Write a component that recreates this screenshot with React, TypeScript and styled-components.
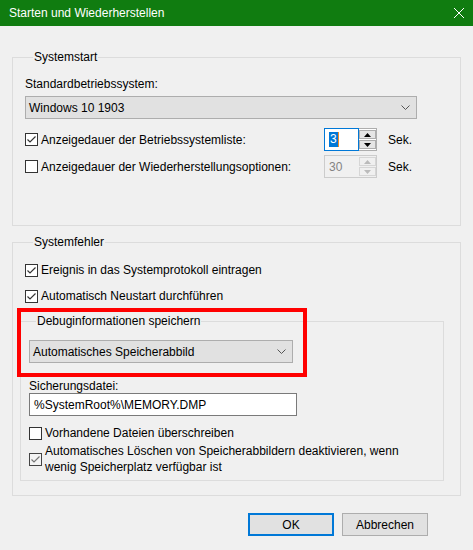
import React from "react";
import styled, { createGlobalStyle } from "styled-components";

const GlobalStyle = createGlobalStyle`
  html, body {
    margin: 0;
    padding: 0;
    background: #f0f0f0;
  }
  body {
    font-family: "Liberation Sans", Arial, sans-serif;
    font-size: 12px;
    color: #000;
  }
`;

const Window = styled.div`
  width: 473px;
  height: 550px;
  background: #f0f0f0;
  display: flex;
  flex-direction: column;
  overflow: hidden;
`;

const TitleBar = styled.div`
  height: 26px;
  flex: none;
  background: #107c10;
  color: #fff;
  display: flex;
  align-items: center;
  justify-content: space-between;
  padding: 0 9px 0 9px;
  font-size: 12px;
`;

const CloseIcon = styled.svg`
  width: 10px;
  height: 10px;
`;

const Body = styled.div`
  padding: 23px 12px 0 12px;
  display: flex;
  flex-direction: column;
`;

const Group = styled.fieldset<{ $pb: number; $mt?: number }>`
  margin: ${(p) => p.$mt ?? 0}px 0 0 0;
  padding: 11px 0 ${(p) => p.$pb}px 12px;
  border: 1px solid #dcdcdc;
  min-width: 0;
  display: flex;
  flex-direction: column;
  position: relative;
`;

const Legend = styled.legend<{ $ml: number }>`
  padding: 0 1px;
  margin-left: ${(p) => p.$ml}px;
  line-height: 16px;
  font-size: 12px;
`;

const InnerGroup = styled.fieldset`
  margin: 9px 16px 0 -5px;
  padding: 4px 0 5px 8px;
  border: 1px solid #dcdcdc;
  min-width: 0;
  display: flex;
  flex-direction: column;
`;

const Label = styled.div<{ $mt?: number }>`
  line-height: 16px;
  margin-top: ${(p) => p.$mt ?? 0}px;
`;

const Combo = styled.div<{ $w: number; $mt: number }>`
  width: ${(p) => p.$w}px;
  height: 23px;
  box-sizing: border-box;
  margin-top: ${(p) => p.$mt}px;
  background: #e1e1e1;
  border: 1px solid #adadad;
  display: flex;
  align-items: center;
  justify-content: space-between;
  padding: 0 6px 0 3px;
`;

const Chevron = styled.svg`
  width: 9px;
  height: 5px;
`;

const TextBox = styled.div`
  width: 268px;
  height: 23px;
  box-sizing: border-box;
  margin-top: -1px;
  background: #fff;
  border: 1px solid #7a7a7a;
  display: flex;
  align-items: center;
  padding: 0 4px;
`;

const OptionRow = styled.div<{ $mt: number }>`
  display: grid;
  grid-template-columns: 288px 53px auto;
  column-gap: 11px;
  align-items: center;
  margin-top: ${(p) => p.$mt}px;
  height: 23px;
`;

const Check = styled.label<{ $mt: number }>`
  display: flex;
  align-items: center;
  gap: 3px;
  margin-top: ${(p) => p.$mt}px;
  line-height: 16px;
`;

const Box = styled.span<{ $dim?: boolean }>`
  width: 13px;
  height: 13px;
  box-sizing: border-box;
  border: 1px solid ${(p) => (p.$dim ? "#444" : "#333")};
  background: ${(p) => (p.$dim ? "#f4f4f4" : "#fff")};
  flex: none;
  display: flex;
  align-items: center;
  justify-content: center;
`;

const Spin = styled.div<{ $active?: boolean }>`
  height: 23px;
  display: flex;
  box-sizing: border-box;
  background: ${(p) => (p.$active ? "#fff" : "#f0f0f0")};
  border: 1px solid ${(p) => (p.$active ? "#adadad" : "#cccccc")};
`;

const SpinText = styled.div<{ $active?: boolean }>`
  flex: 1;
  box-sizing: border-box;
  margin: -1px 0 -1px -1px;
  border: 1px solid ${(p) => (p.$active ? "#0078d7" : "transparent")};
  display: flex;
  align-items: center;
  padding-left: 4px;
  color: ${(p) => (p.$active ? "#fff" : "#838383")};
`;

const Selected = styled.span`
  background: #0078d7;
  line-height: 15px;
  padding: 0 1px;
  border-right: 1px solid #f08a24;
`;

const SpinButtons = styled.div`
  width: 17px;
  display: flex;
  flex-direction: column;
  gap: 1px;
  padding: 1px 0;
`;

const SpinButton = styled.div<{ $active?: boolean }>`
  flex: 1;
  box-sizing: border-box;
  background: ${(p) => (p.$active ? "#e5e5e5" : "#f0f0f0")};
  border: 1px solid ${(p) => (p.$active ? "#adadad" : "#d6d6d6")};
  display: flex;
  align-items: center;
  justify-content: center;
`;

const Arrow = styled.svg`
  width: 7px;
  height: 4px;
`;

const Unit = styled.span`
  line-height: 16px;
`;

const Highlight = styled.div`
  position: absolute;
  left: 4px;
  top: 58px;
  width: 290px;
  height: 69px;
  box-sizing: border-box;
  border: 4px solid #ff0000;
  pointer-events: none;
`;

const Footer = styled.div`
  display: flex;
  justify-content: flex-end;
  gap: 8px;
  padding: 17px 45px 0 0;
`;

const Button = styled.div<{ $primary?: boolean }>`
  width: 86px;
  height: 23px;
  box-sizing: border-box;
  background: #e1e1e1;
  border: ${(p) => (p.$primary ? "2px solid #0078d7" : "1px solid #adadad")};
  display: flex;
  align-items: center;
  justify-content: center;
`;

const CheckBox = ({ checked, dim }: { checked?: boolean; dim?: boolean }) => (
  <Box $dim={dim}>
    {checked && (
      <svg width="11" height="11" viewBox="0 0 11 11">
        <path d="M1.5 5.5 L4 8 L9.5 2.5" fill="none" stroke={dim ? "#777" : "#333"} strokeWidth="1.2" />
      </svg>
    )}
  </Box>
);

const ComboArrow = () => (
  <Chevron viewBox="0 0 9 5">
    <path d="M0.5 0.5 L4.5 4.5 L8.5 0.5" fill="none" stroke="#555" strokeWidth="1" />
  </Chevron>
);

const SpinBox = ({ value, active }: { value: string; active?: boolean }) => {
  const c = active ? "#000" : "#bbb";
  return (
    <Spin $active={active}>
      <SpinText $active={active}>{active ? <Selected>{value}</Selected> : value}</SpinText>
      <SpinButtons>
        <SpinButton $active={active}>
          <Arrow viewBox="0 0 7 4">
            <path d="M0 4 L3.5 0 L7 4 Z" fill={c} />
          </Arrow>
        </SpinButton>
        <SpinButton $active={active}>
          <Arrow viewBox="0 0 7 4">
            <path d="M0 0 L3.5 4 L7 0 Z" fill={c} />
          </Arrow>
        </SpinButton>
      </SpinButtons>
    </Spin>
  );
};

export default function App() {
  return (
    <Window>
      <GlobalStyle />
      <TitleBar>
        <span>Starten und Wiederherstellen</span>
        <CloseIcon viewBox="0 0 10 10">
          <path d="M0 0 L10 10 M10 0 L0 10" stroke="#fff" strokeWidth="1" />
        </CloseIcon>
      </TitleBar>
      <Body>
        <Group $pb={47}>
          <Legend $ml={8}>Systemstart</Legend>
          <Label>Standardbetriebssystem:</Label>
          <Combo $w={392} $mt={4}>
            <span>Windows 10 1903</span>
            <ComboArrow />
          </Combo>
          <OptionRow $mt={9}>
            <Check $mt={0}>
              <CheckBox checked />
              Anzeigedauer der Betriebssystemliste:
            </Check>
            <SpinBox value="3" active />
            <Unit>Sek.</Unit>
          </OptionRow>
          <OptionRow $mt={4}>
            <Check $mt={0}>
              <CheckBox />
              Anzeigedauer der Wiederherstellungsoptionen:
            </Check>
            <SpinBox value="30" />
            <Unit>Sek.</Unit>
          </OptionRow>
        </Group>

        <Group $pb={14} $mt={8}>
          <Legend $ml={8}>Systemfehler</Legend>
          <Check $mt={1}>
            <CheckBox checked />
            Ereignis in das Systemprotokoll eintragen
          </Check>
          <Check $mt={10}>
            <CheckBox checked />
            Automatisch Neustart durchführen
          </Check>
          <InnerGroup>
            <Legend $ml={7}>Debuginformationen speichern</Legend>
            <Combo $w={264} $mt={7}>
              <span>Automatisches Speicherabbild</span>
              <ComboArrow />
            </Combo>
            <Label $mt={15}>Sicherungsdatei:</Label>
            <TextBox>%SystemRoot%\MEMORY.DMP</TextBox>
            <Check $mt={9}>
              <CheckBox />
              Vorhandene Dateien überschreiben
            </Check>
            <Check $mt={2}>
              <CheckBox checked dim />
              <span>
                Automatisches Löschen von Speicherabbildern deaktivieren, wenn
                <br />
                wenig Speicherplatz verfügbar ist
              </span>
            </Check>
          </InnerGroup>
          <Highlight />
        </Group>
      </Body>
      <Footer>
        <Button $primary>OK</Button>
        <Button>Abbrechen</Button>
      </Footer>
    </Window>
  );
}
